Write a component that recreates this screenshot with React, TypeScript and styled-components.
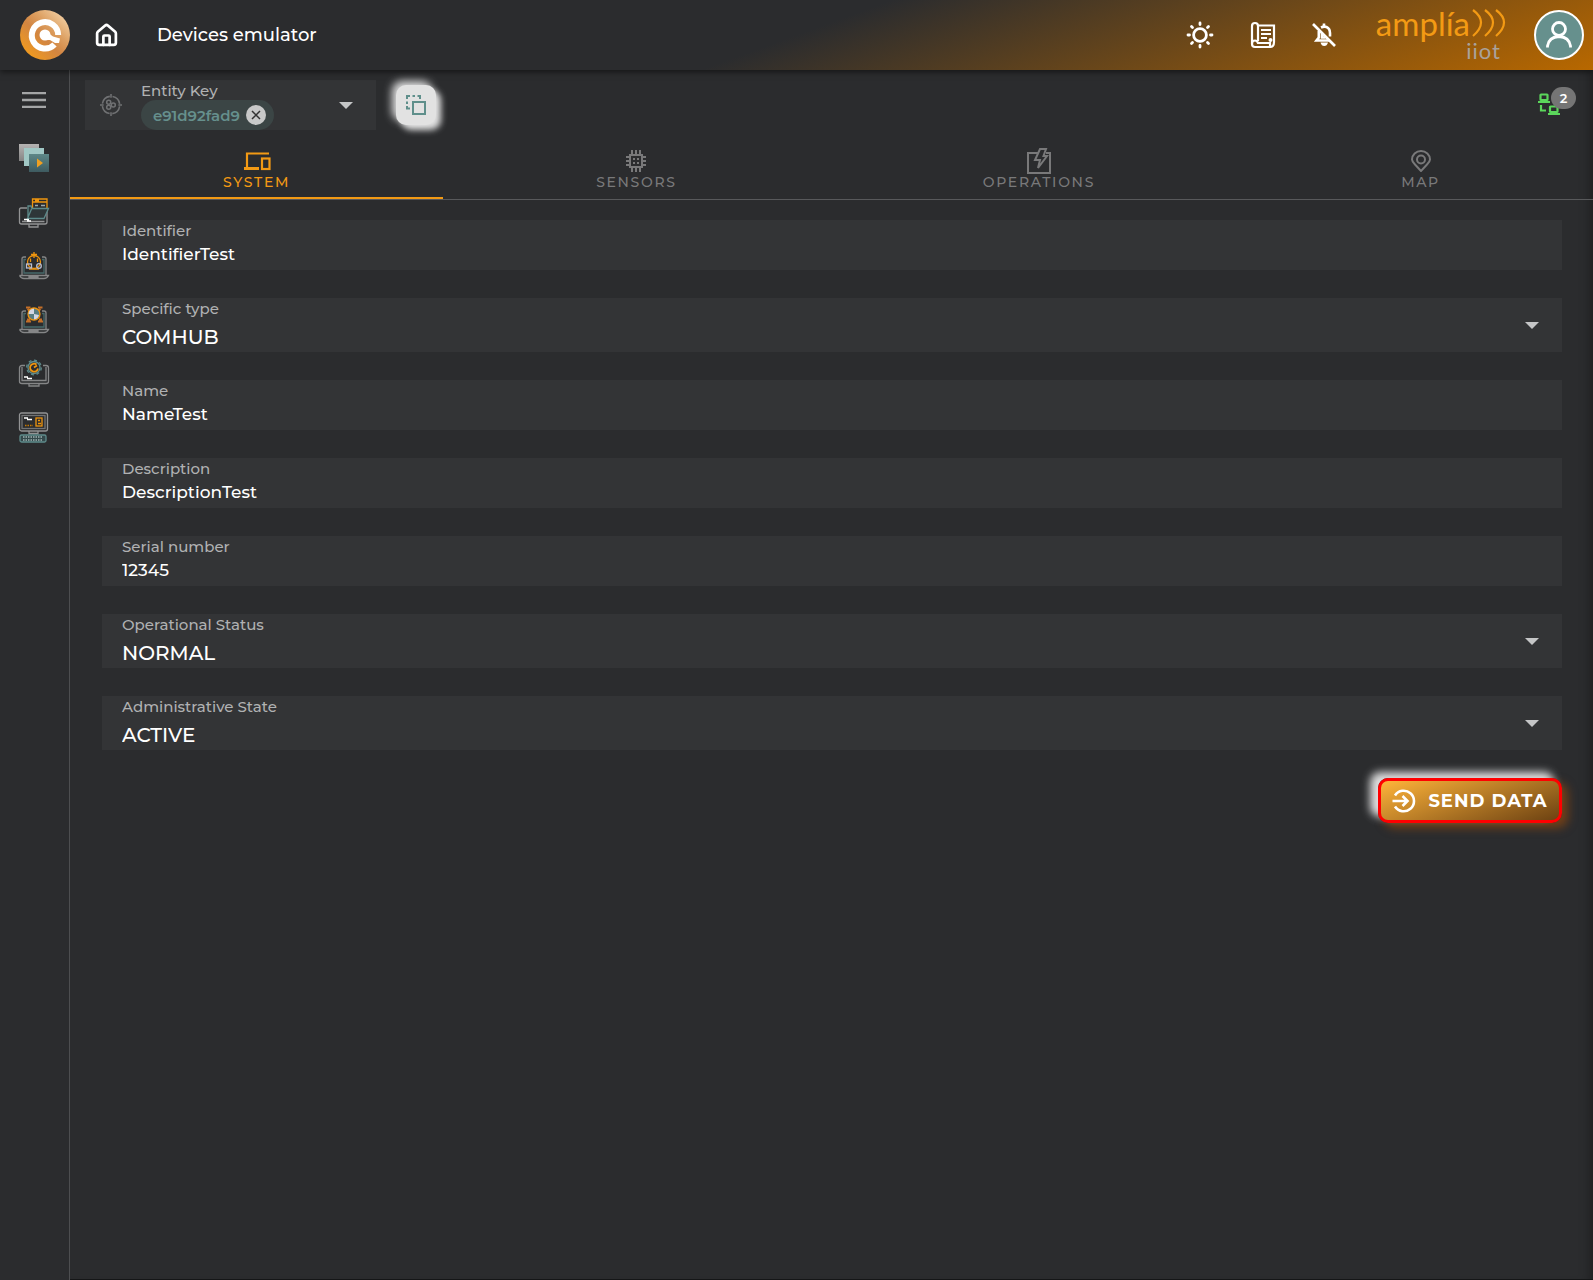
import React from "react";
import styled, { createGlobalStyle, css } from "styled-components";
import { LuHouse } from "react-icons/lu";

const Global = createGlobalStyle`
  * { box-sizing: border-box; }
  body { margin: 0; background: #2b2c2e; }
  body, button, input, select { font-family: Montserrat, Inter, "Open Sans", sans-serif; }
  button { border: 0; padding: 0; background: none; color: inherit; cursor: pointer; }
`;

const Page = styled.div`
  min-height: 100vh;
  display: flex;
  flex-direction: column;
  background: #2b2c2e;
  color: #fff;
`;

const Header = styled.header`
  height: 70px;
  flex: none;
  display: flex;
  align-items: center;
  justify-content: space-between;
  padding: 0 9px 0 20px;
  background: linear-gradient(160deg, #2b2c2e 50%, #b86800 100%);
  box-shadow: 0 2px 6px rgba(0, 0, 0, 0.5);
  z-index: 1;
`;

const HeaderGroup = styled.div<{ $gap: number }>`
  display: flex;
  align-items: center;
  gap: ${(p) => p.$gap}px;
`;

const Title = styled.h1`
  margin: 0 0 0 14px;
  font-size: 18px;
  line-height: 24px;
  font-weight: 500;
`;

const IconButton = styled.button`
  display: flex;
  align-items: center;
  justify-content: center;
`;

const Brand = styled.div`
  display: flex;
  flex-direction: column;
  align-items: flex-end;
`;

const BrandName = styled.div`
  display: flex;
  align-items: center;
  gap: 1px;
  color: #f39a14;
  font-family: Lato, sans-serif;
  font-size: 33px;
  line-height: 32px;
`;

const BrandSub = styled.span`
  padding-right: 5px;
  color: #aaa29b;
  font-family: Lato, sans-serif;
  font-size: 22px;
  line-height: 24px;
  letter-spacing: 1px;
`;

const Avatar = styled.button`
  width: 50px;
  height: 50px;
  border: 2px solid #fff;
  border-radius: 50%;
  background: #66908d;
  display: flex;
  align-items: center;
  justify-content: center;
`;

const Body = styled.div`
  flex: 1;
  display: flex;
`;

const Sidebar = styled.nav`
  width: 70px;
  flex: none;
  border-right: 1px solid #4d4e50;
  display: flex;
  flex-direction: column;
  align-items: center;
  padding: 16px 2px 0 0;
  gap: 22px;
`;

const MenuButton = styled(IconButton)`
  height: 28px;
  margin-bottom: 6px;
`;

const Main = styled.main`
  flex: 1;
  min-width: 0;
  display: flex;
  flex-direction: column;
  border-bottom: 1px solid #151617;
  box-shadow: inset -12px 0 12px -10px rgba(0, 0, 0, 0.35);
`;

const Toolbar = styled.div`
  display: flex;
  align-items: center;
  padding: 10px 17px 0 15px;
  gap: 20px;
`;

const EntityField = styled.div`
  width: 291px;
  height: 50px;
  display: flex;
  align-items: center;
  gap: 19px;
  padding: 0 23px 0 15px;
  background: #333436;
`;

const EntityContent = styled.div`
  flex: 1;
  height: 50px;
  display: flex;
  flex-direction: column;
  align-items: flex-start;
`;

const EntityLabel = styled.span`
  height: 20px;
  font-size: 15px;
  line-height: 22px;
  font-weight: 500;
  color: #b0b1b2;
`;

const Chip = styled.span`
  width: 133px;
  height: 30px;
  display: flex;
  align-items: center;
  justify-content: space-between;
  padding: 0 8px 0 12px;
  border-radius: 15px;
  background: #3b4545;
  color: #66908d;
  font-size: 15px;
  font-weight: 600;
`;

const ChipText = styled.span`
  width: 87px;
  overflow: hidden;
  white-space: nowrap;
`;

const ChipRemove = styled.button`
  width: 20px;
  height: 20px;
  border-radius: 50%;
  background: #c8c9c9;
  display: flex;
  align-items: center;
  justify-content: center;
`;

const CopyButton = styled.button`
  width: 40px;
  height: 40px;
  border-radius: 10px;
  background: #e2e2e2;
  display: flex;
  align-items: center;
  justify-content: center;
  box-shadow: -4px -4px 8px rgba(255, 255, 255, 0.85), 5px 5px 6px rgba(255, 255, 255, 0.85);
`;

const Connections = styled.button`
  position: relative;
  align-self: flex-start;
  width: 38px;
  height: 28px;
  margin: 7px 0 0 auto;
  display: flex;
  align-items: flex-end;
`;

const Badge = styled.span`
  position: absolute;
  top: 0;
  right: 0;
  width: 25px;
  height: 22px;
  border-radius: 11px;
  background: #757575;
  color: #fff;
  font-size: 13px;
  line-height: 22px;
  font-weight: 600;
`;

const Tabs = styled.div`
  display: flex;
  height: 70px;
  border-bottom: 1px solid #58595b;
`;

const Tab = styled.button<{ $active?: boolean }>`
  flex: 1 1 auto;
  display: flex;
  flex-direction: column;
  align-items: center;
  justify-content: flex-end;
  padding-bottom: ${(p) => (p.$active ? 6 : 8)}px;
  color: #79797a;
  font-size: 14px;
  line-height: 18px;
  font-weight: 500;
  letter-spacing: 0.12em;
  ${(p) =>
    p.$active &&
    css`
      color: #f39a14;
      border-bottom: 2px solid #f39a14;
    `}
`;

const TabIcon = styled.span`
  height: 24px;
  display: flex;
  align-items: center;
  svg { flex: none; }
`;

const Form = styled.form`
  display: flex;
  flex-direction: column;
  padding: 20px 31px 0 32px;
  gap: 28px;
`;

const Field = styled.div<{ $tall?: boolean }>`
  position: relative;
  height: ${(p) => (p.$tall ? 54 : 50)}px;
  display: flex;
  flex-direction: column;
  background: #333436;
`;

const FieldLabel = styled.label`
  padding-left: 20px;
  color: #b0b1b2;
  font-size: 15px;
  line-height: 22px;
  font-weight: 500;
`;

const controlStyle = css`
  width: 100%;
  border: 0;
  outline: 0;
  margin: 0;
  padding: 0 20px;
  background: transparent;
  color: #fff;
  font-weight: 500;
`;

const TextInput = styled.input`
  ${controlStyle}
  height: 24px;
  font-size: 17px;
`;

const SelectInput = styled.select`
  ${controlStyle}
  appearance: none;
  height: 32px;
  padding-top: 2px;
  font-size: 20px;
  option { color: #000; }
`;

const Arrow = styled.span`
  position: absolute;
  right: 23px;
  top: 24px;
  display: flex;
  pointer-events: none;
`;

const SendButton = styled.button`
  align-self: flex-end;
  width: 184px;
  height: 45px;
  display: flex;
  align-items: center;
  justify-content: center;
  gap: 12px;
  border: 3px solid #f00;
  border-radius: 10px;
  background: linear-gradient(160deg, #ffb43a, #6d4212);
  box-shadow: -8px -6px 8px rgba(255, 255, 255, 0.85), 6px 5px 10px rgba(184, 84, 0, 0.5);
  color: #fff;
  font-size: 18px;
  line-height: 24px;
  font-weight: 700;
  letter-spacing: 1px;
`;

const Logo = () => (
  <svg width="50" height="50" viewBox="0 0 50 50" aria-label="Home logo">
    <defs>
      <linearGradient id="logo" x1="0.1" y1="0.9" x2="0.85" y2="0.1">
        <stop offset="0" stopColor="#f39c1c" />
        <stop offset="0.45" stopColor="#d28541" />
        <stop offset="0.7" stopColor="#dda062" />
        <stop offset="1" stopColor="#f0cb9e" />
      </linearGradient>
    </defs>
    <circle cx="25" cy="25" r="25" fill="url(#logo)" />
    <path d="M34.5 34.5A13.2 13.2 0 1 1 38.2 25" fill="none" stroke="#fff" strokeWidth="6" />
    <circle cx="25" cy="25" r="5.5" fill="#fff" />
    <path d="M27 22L33 26.5L40 28.5L39 33L35 33L30 30L25 30Z" fill="#fff" />
  </svg>
);

const SunIcon = () => (
  <svg width="28" height="28" viewBox="0 0 28 28" fill="none" stroke="#fff" strokeWidth="2.8" strokeLinecap="round">
    <circle cx="14" cy="14" r="6.4" />
    <path d="M14 2v1.5M14 24.5V26M2 14h1.5M24.5 14H26M5.5 5.5l1 1M21.5 21.5l1 1M5.5 22.5l1-1M21.5 6.5l1-1" />
  </svg>
);

const ScrollIcon = () => (
  <svg width="26" height="28" viewBox="0 0 26 28" fill="none" stroke="#fff" strokeWidth="2.2">
    <path d="M8 4.500H24V19M8 20V5Q8 2 5 2Q2 2 2 5V23Q2 26 5 26H20V22H8Q7 19.500 5 19.500Q2 19.500 2 23M20 26Q24 26 24 21V18" />
    <path d="M11 9h10M11 13h10M11 17h6" />
    <circle cx="20.500" cy="19" r="2" fill="#fff" stroke="none" />
  </svg>
);

const BellOffIcon = () => (
  <svg width="24" height="24" viewBox="0 0 24 24" fill="none" stroke="#fff" strokeWidth="2.6">
    <path d="M1 1L23 23" />
    <path d="M9 4.500Q12 3 14.500 4Q18 5.500 18 10V13.500M6.800 8V14.500L4.500 17.500H17" />
    <path d="M12 4V0.500M10 10.500V14.500H13.500" />
    <path d="M8.500 19.500H16Q15 23 12.200 23Q9.500 23 8.500 19.500Z" fill="#fff" stroke="none" />
  </svg>
);

const PersonIcon = () => (
  <svg width="30" height="30" viewBox="0 0 30 30" fill="none" stroke="#fff" strokeWidth="2.8">
    <circle cx="15" cy="9" r="6.500" />
    <path d="M3.500 27.500V26Q5 17 15 16.500Q25 17 26.500 26V27.500" />
  </svg>
);

const WavesIcon = () => (
  <svg width="35" height="30" viewBox="0 0 35 30" fill="none" stroke="#f39a14" strokeWidth="2.200">
    <path d="M2 2Q18 14 2 28M14 2Q30 14 14 28M25 2Q41 14 25 28" />
  </svg>
);

const TargetIcon = () => (
  <svg width="22" height="24" viewBox="0 0 24 24" fill="none" stroke="#707173" strokeWidth="1.700">
    <circle cx="12" cy="12" r="9.500" strokeDasharray="11.900 3" strokeDashoffset="-1.500" />
    <path d="M12 0v4M12 20v4M0 12h4M20 12h4" />
    <circle cx="9.500" cy="9" r="2.200" />
    <circle cx="9.500" cy="14.500" r="2.200" />
    <circle cx="14.500" cy="12" r="2.200" />
  </svg>
);

const CaretIcon = () => (
  <svg width="14" height="7" viewBox="0 0 14 7"><path d="M0 0H14L7 7Z" fill="#c5c6c7" /></svg>
);

const CopyIcon = () => (
  <svg width="20" height="20" viewBox="0 0 20 20" fill="none" stroke="#5f8f8b" strokeWidth="2">
    <rect x="7" y="7" width="12" height="12" />
    <path d="M1 4V1H4M6.500 1H9M11.500 1H14V4M1 6.500V9M1 11V13.500H4" />
  </svg>
);

const NetworkIcon = () => (
  <svg width="22" height="22" viewBox="0 0 22 22" fill="none" stroke="#5bd65b" strokeWidth="2.200">
    <rect x="2.500" y="1.500" width="7" height="5.500" rx="0.500" />
    <path d="M0 9h12M10 21h12M3 12v5.500h5" />
    <rect x="12" y="13.500" width="7.500" height="5.500" rx="0.500" />
  </svg>
);

const DevicesIcon = () => (
  <svg width="28" height="19" viewBox="0 0 28 19" fill="none" stroke="currentColor" strokeWidth="2.200">
    <path d="M26 1.500H4V15" />
    <path d="M1 16.500H16" strokeWidth="3" />
    <rect x="19" y="6.500" width="7.500" height="10.500" />
  </svg>
);

const ChipIcon = () => (
  <svg width="20" height="22" viewBox="0 0 20 22" fill="none" stroke="currentColor" strokeWidth="2">
    <rect x="4" y="5" width="12" height="12" />
    <path d="M6 0v4M10 0v4M14 0v4M6 18v4M10 18v4M14 18v4M0 7h3M0 11h3M0 15h3M17 7h3M17 11h3M17 15h3" />
    <path d="M7 9h2M11 9h2M7 13h2M11 13h2" />
  </svg>
);

const OperationIcon = () => (
  <svg width="26" height="26" viewBox="0 0 26 26" fill="none" stroke="currentColor" strokeWidth="2">
    <path d="M12 5H2V25H24V5H20" />
    <path d="M14 1H20L17.500 8H21L12 20L14 12H9Z" />
  </svg>
);

const PinIcon = () => (
  <svg width="20" height="22" viewBox="0 0 20 22" fill="none" stroke="currentColor" strokeWidth="2">
    <path d="M10 21L4 14.500Q1 11.500 1 9.500A9 8.500 0 0 1 19 9.500Q19 11.500 16 14.500Z" />
    <circle cx="10" cy="9.500" r="4" />
  </svg>
);

const SendIcon = () => (
  <svg width="24" height="24" viewBox="0 0 24 24" fill="none" stroke="#fff" strokeWidth="2.600">
    <path d="M3 6.500A10.300 10.300 0 1 1 3 17.500M0.500 12H15M10.500 7L15.500 12L10.500 17" />
  </svg>
);

const LayersIcon = () => (
  <svg width="32" height="32" viewBox="0 0 32 32">
    <defs>
      <linearGradient id="layerGrey" x2="0" y2="1"><stop stopColor="#b5b3b2" /><stop offset="1" stopColor="#858484" /></linearGradient>
      <linearGradient id="layerTeal" x2="0" y2="1"><stop stopColor="#5d8787" /><stop offset="1" stopColor="#3e5b60" /></linearGradient>
    </defs>
    <rect x="1" y="2" width="20" height="17" fill="url(#layerGrey)" />
    <rect x="6" y="6" width="20" height="18" fill="#a0c7c4" />
    <rect x="11" y="12" width="20" height="18" fill="url(#layerTeal)" />
    <path d="M19 16.500L25 21L19 25.500Z" fill="#f0a020" />
  </svg>
);

const FolderIcon = () => (
  <svg width="32" height="32" viewBox="0 0 32 32" fill="none" strokeWidth="1.300">
    <path d="M9 12H3Q1.500 12 1.500 14V26Q1.500 28 3.500 28H27Q29 28 29 26V15M11 28V31H20V28M4 25.500H26.500" stroke="#929394" />
    <path d="M14.500 12V3H29V12M15 6H29M17 4.500H21" stroke="#ee950f" />
    <path d="M17 9.500h3M23 9.500h4" stroke="#9da8a8" />
    <path d="M10 22V10H13L14 12.500H30.500L26 22.500H9.500L13.500 13" fill="#2e3638" stroke="#5d8a8a" />
    <path d="M6 23.500h5M9 25h4" stroke="#fff" />
  </svg>
);

const LaptopBase = () => (
  <>
    <path d="M4 25V9Q4 7 6 7H8M24 7H26Q28 7 28 9V25M1.500 25.500H30.500Q29 28.500 26 28.500H6Q3 28.500 1.500 25.500M11 26V27H20V26" stroke="#858687" />
    <path d="M8 9.500H6V23H26V9.500H24" stroke="#486a6b" />
  </>
);

const AlarmIcon = () => (
  <svg width="32" height="32" viewBox="0 0 32 32" fill="none" strokeWidth="1.300">
    <LaptopBase />
    <circle cx="16" cy="12" r="6.500" stroke="#ee950f" />
    <path d="M16 2V8M13 4.500H19M12.500 8.500V12M19.500 8.500V12M11 19H21" stroke="#ee950f" />
    <rect x="8.500" y="14" width="5" height="4" stroke="#b8bed2" />
    <circle cx="21" cy="16" r="2.300" stroke="#b8bed2" />
  </svg>
);

const GlobeIcon = () => (
  <svg width="32" height="32" viewBox="0 0 32 32" fill="none" strokeWidth="1.300">
    <LaptopBase />
    <path d="M8 3.500h4.500M20 3.500h4.500M9.500 5L13 8M22.500 5L19 8M8 17.500h5M20 17.500h5M9 15.500h3M21 15.500h3" stroke="#c36f28" strokeWidth="2" />
    <circle cx="16" cy="10" r="6" fill="#5a7e83" stroke="#ee950f" />
    <path d="M16 10H10.500A5.500 5.500 0 0 1 16 4.500ZM16 10V15.500A5.500 5.500 0 0 0 21 11Z" fill="#d5d7e4" />
  </svg>
);

const GearIcon = () => (
  <svg width="32" height="32" viewBox="0 0 32 32" fill="none" strokeWidth="1.300">
    <path d="M7 7.500H4Q1.500 7.500 1.500 10V23.500Q1.500 25.500 4 25.500H28Q30.500 25.500 30.500 23.500V10Q30.500 7.500 28 7.500H25M11 26V28H21V26M4 9V22.500H28V9" stroke="#858687" />
    <circle cx="16" cy="9.500" r="6" stroke="#5f8c8c" />
    <circle cx="16" cy="9.500" r="7.300" stroke="#5f8c8c" strokeDasharray="3 2.700" />
    <path d="M18.500 6.500A4 4 0 1 0 20 10.500M16 9.500L19 7.500" stroke="#ee950f" strokeWidth="1.800" />
    <path d="M6 19h4M9 20.500h5" stroke="#fff" />
  </svg>
);

const TerminalIcon = () => (
  <svg width="32" height="32" viewBox="0 0 32 32" fill="none" strokeWidth="1.300">
    <rect x="1.500" y="1" width="28" height="18" rx="2" stroke="#929394" />
    <rect x="4" y="3.500" width="23" height="13" stroke="#727374" />
    <path d="M11 19V21.500H20V19" stroke="#929394" />
    <path d="M6 6h4M9 7.500h5" stroke="#fff" />
    <path d="M7 13.500h8" stroke="#c87900" strokeDasharray="1.500 1" />
    <rect x="18" y="6" width="6" height="8" stroke="#ee950f" />
    <path d="M20 8.500h2M20 11.500h3" stroke="#ee950f" />
    <rect x="2" y="23" width="26" height="7" rx="1.500" fill="#34494b" stroke="#5f8c8c" />
    <path d="M5 25h20M5 28h20" stroke="#9fb4b4" strokeDasharray="1.500 1" />
  </svg>
);

type FieldData = { id: string; label: string; value: string; select?: boolean };

const fields: FieldData[] = [
  { id: "identifier", label: "Identifier", value: "IdentifierTest" },
  { id: "type", label: "Specific type", value: "COMHUB", select: true },
  { id: "name", label: "Name", value: "NameTest" },
  { id: "description", label: "Description", value: "DescriptionTest" },
  { id: "serial", label: "Serial number", value: "12345" },
  { id: "status", label: "Operational Status", value: "NORMAL", select: true },
  { id: "state", label: "Administrative State", value: "ACTIVE", select: true },
];

const navItems = [
  { name: "Emulators", Icon: LayersIcon },
  { name: "Provisioning", Icon: FolderIcon },
  { name: "Alarms", Icon: AlarmIcon },
  { name: "Datasets", Icon: GlobeIcon },
  { name: "Settings", Icon: GearIcon },
  { name: "Terminal", Icon: TerminalIcon },
];

const tabs = [
  { name: "SYSTEM", Icon: DevicesIcon },
  { name: "SENSORS", Icon: ChipIcon },
  { name: "OPERATIONS", Icon: OperationIcon },
  { name: "MAP", Icon: PinIcon },
];

export default function App() {
  const [active, setActive] = React.useState("SYSTEM");
  return (
    <Page>
      <Global />
      <Header>
        <HeaderGroup $gap={24}>
          <Logo />
          <IconButton aria-label="Home"><LuHouse size={25} strokeWidth={2.6} /></IconButton>
          <Title>Devices emulator</Title>
        </HeaderGroup>
        <HeaderGroup $gap={40}>
          <HeaderGroup $gap={36}>
            <IconButton aria-label="Theme"><SunIcon /></IconButton>
            <IconButton aria-label="Logs"><ScrollIcon /></IconButton>
            <IconButton aria-label="Notifications off"><BellOffIcon /></IconButton>
          </HeaderGroup>
          <HeaderGroup $gap={28}>
            <Brand>
              <BrandName>amplía<WavesIcon /></BrandName>
              <BrandSub>iiot</BrandSub>
            </Brand>
            <Avatar aria-label="Account"><PersonIcon /></Avatar>
          </HeaderGroup>
        </HeaderGroup>
      </Header>
      <Body>
        <Sidebar>
          <MenuButton aria-label="Menu">
            <svg width="24" height="16" viewBox="0 0 24 16" stroke="#a5a6a7" strokeWidth="2.400">
              <path d="M0 1h24M0 8h24M0 15h24" />
            </svg>
          </MenuButton>
          {navItems.map(({ name, Icon }) => (
            <IconButton key={name} aria-label={name}><Icon /></IconButton>
          ))}
        </Sidebar>
        <Main>
          <Toolbar>
            <EntityField>
              <TargetIcon />
              <EntityContent>
                <EntityLabel>Entity Key</EntityLabel>
                <Chip>
                  <ChipText>e91d92fad9</ChipText>
                  <ChipRemove aria-label="Remove key">
                    <svg width="10" height="10" viewBox="0 0 10 10" stroke="#333" strokeWidth="1.500"><path d="M1 1L9 9M9 1L1 9" /></svg>
                  </ChipRemove>
                </Chip>
              </EntityContent>
              <IconButton aria-label="Open entity list"><CaretIcon /></IconButton>
            </EntityField>
            <CopyButton aria-label="Copy entity"><CopyIcon /></CopyButton>
            <Connections aria-label="Connections">
              <NetworkIcon />
              <Badge>2</Badge>
            </Connections>
          </Toolbar>
          <Tabs role="tablist">
            {tabs.map(({ name, Icon }) => (
              <Tab
                key={name}
                role="tab"
                aria-selected={active === name}
                $active={active === name}
                onClick={() => setActive(name)}
              >
                <TabIcon><Icon /></TabIcon>
                {name}
              </Tab>
            ))}
          </Tabs>
          <Form onSubmit={(e) => e.preventDefault()}>
            {fields.map((f) => (
              <Field key={f.id} $tall={f.select}>
                <FieldLabel htmlFor={f.id}>{f.label}</FieldLabel>
                {f.select ? (
                  <>
                    <SelectInput id={f.id} defaultValue={f.value}><option>{f.value}</option></SelectInput>
                    <Arrow><CaretIcon /></Arrow>
                  </>
                ) : (
                  <TextInput id={f.id} defaultValue={f.value} />
                )}
              </Field>
            ))}
            <SendButton type="submit"><SendIcon />SEND DATA</SendButton>
          </Form>
        </Main>
      </Body>
    </Page>
  );
}
